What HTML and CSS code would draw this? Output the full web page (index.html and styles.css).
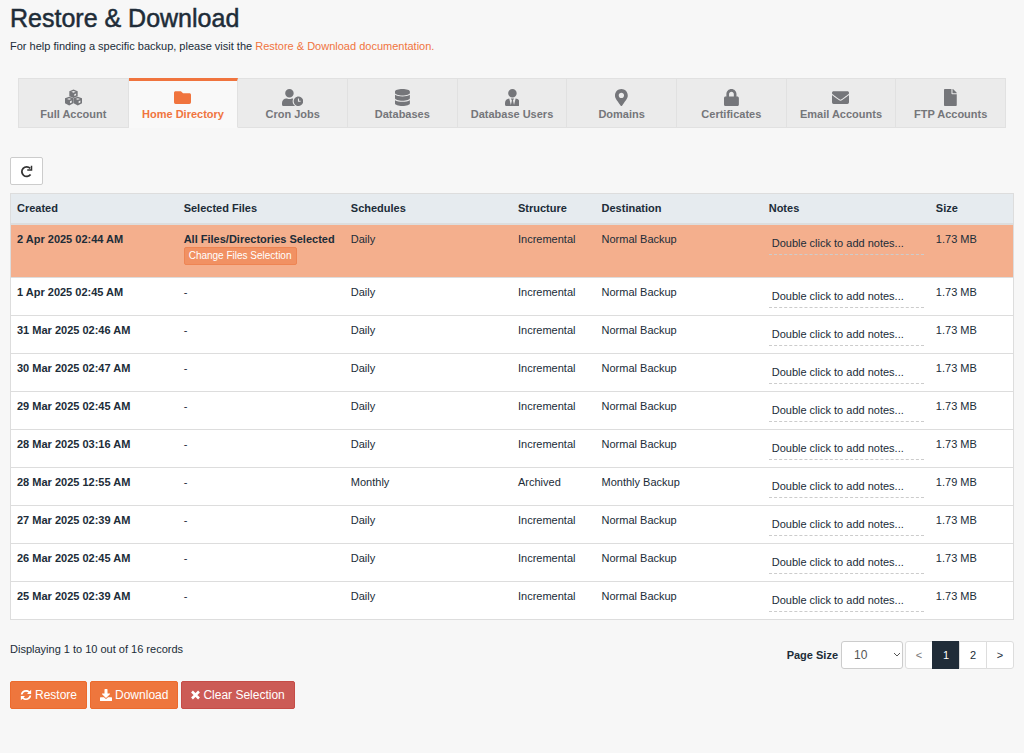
FILE: index.html
```html
<!DOCTYPE html>
<html lang="en">
<head>
    <meta charset="UTF-8">
    <meta name="viewport" content="width=device-width, initial-scale=1.0">
    <title>Restore &amp; Download</title>
    <link rel="stylesheet" href="styles.css">
</head>
<body>
    <h1>Restore &amp; Download</h1>
    <p class="help">For help finding a specific backup, please visit the <a href="#">Restore &amp; Download documentation.</a></p>

    <nav class="tabs">
        <a href="#" class="tab">
            <svg viewBox="0 0 512 512"><path fill-rule="evenodd" d="M256 18l126 50v150l-126 56-126-56V68zM256 62l-66 24 66 26 66-26zM280 156v58l54-24v-56zM126 232l126 50v150l-126 62L0 432V282zM126 276l-66 24 66 26 66-26zM150 370v60l54-27v-56zM386 232l126 50v150l-126 62-126-62V282zM386 276l-66 24 66 26 66-26zM410 370v60l54-27v-56z"/></svg>
            <span>Full Account</span>
        </a>
        <a href="#" class="tab active">
            <svg viewBox="0 0 512 512"><path d="M464 128H272l-64-64H48C21.49 64 0 85.49 0 112v288c0 26.51 21.49 48 48 48h416c26.51 0 48-21.49 48-48V176c0-26.51-21.49-48-48-48z"/></svg>
            <span>Home Directory</span>
        </a>
        <a href="#" class="tab">
            <svg viewBox="0 0 640 512"><path d="M496 224c-79.6 0-144 64.4-144 144s64.4 144 144 144 144-64.4 144-144-64.4-144-144-144zm64 150.3c0 5.3-4.4 9.7-9.7 9.7h-60.6c-5.3 0-9.7-4.4-9.7-9.7v-76.6c0-5.3 4.4-9.7 9.7-9.7h12.6c5.3 0 9.7 4.4 9.7 9.7V352h38.3c5.3 0 9.7 4.4 9.7 9.7v12.6zM320 368c0-27.8 6.7-54.1 18.2-77.5-8-1.5-16.2-2.5-24.6-2.5h-16.7c-22.2 10.2-46.9 16-72.9 16s-50.6-5.8-72.9-16h-16.7C60.2 288 0 348.2 0 422.4V464c0 26.5 21.5 48 48 48h347.1c-45.3-31.9-75.1-84.5-75.1-144zm-96-112c70.7 0 128-57.3 128-128S294.7 0 224 0 96 57.3 96 128s57.3 128 128 128z"/></svg>
            <span>Cron Jobs</span>
        </a>
        <a href="#" class="tab">
            <svg viewBox="0 0 448 512"><path d="M448 73.143v45.714C448 159.143 347.667 192 224 192S0 159.143 0 118.857V73.143C0 32.857 100.333 0 224 0s224 32.857 224 73.143zM448 176v102.857C448 319.143 347.667 352 224 352S0 319.143 0 278.857V176c48.125 33.143 136.208 48.572 224 48.572S399.874 209.143 448 176zm0 160v102.857C448 479.143 347.667 512 224 512S0 479.143 0 438.857V336c48.125 33.143 136.208 48.572 224 48.572S399.874 369.143 448 336z"/></svg>
            <span>Databases</span>
        </a>
        <a href="#" class="tab">
            <svg viewBox="0 0 448 512"><path d="M224 256c70.7 0 128-57.3 128-128S294.7 0 224 0 96 57.3 96 128s57.3 128 128 128zm95.8 32.6L272 480l-32-136 32-56h-96l32 56-32 136-47.8-191.4C56.9 292 0 350.3 0 422.4V464c0 26.5 21.5 48 48 48h352c26.5 0 48-21.5 48-48v-41.6c0-72.1-56.9-130.4-128.2-133.8z"/></svg>
            <span>Database Users</span>
        </a>
        <a href="#" class="tab">
            <svg viewBox="0 0 384 512"><path d="M172.268 501.67C26.97 291.031 0 269.413 0 192 0 85.961 85.961 0 192 0s192 85.961 192 192c0 77.413-26.97 99.031-172.268 309.67-9.535 13.774-29.93 13.773-39.464 0zM192 272c44.183 0 80-35.817 80-80s-35.817-80-80-80-80 35.817-80 80 35.817 80 80 80z"/></svg>
            <span>Domains</span>
        </a>
        <a href="#" class="tab">
            <svg viewBox="0 0 448 512"><path d="M400 224h-24v-72C376 68.2 307.8 0 224 0S72 68.2 72 152v72H48c-26.5 0-48 21.5-48 48v192c0 26.5 21.5 48 48 48h352c26.5 0 48-21.5 48-48V272c0-26.5-21.5-48-48-48zm-104 0H152v-72c0-39.7 32.3-72 72-72s72 32.3 72 72v72z"/></svg>
            <span>Certificates</span>
        </a>
        <a href="#" class="tab">
            <svg viewBox="0 0 512 512"><path d="M502.3 190.8c3.9-3.1 9.7-.2 9.7 4.7V400c0 26.5-21.5 48-48 48H48c-26.5 0-48-21.5-48-48V195.6c0-5 5.7-7.8 9.7-4.7 22.4 17.4 52.1 39.5 154.1 113.6 21.1 15.4 56.7 47.8 92.2 47.6 35.7.3 72-32.8 92.3-47.6 102-74.1 131.6-96.3 154-113.7zM256 320c23.2.4 56.6-29.2 73.4-41.4 132.7-96.3 142.8-104.7 173.4-128.7 5.8-4.5 9.2-11.5 9.2-18.9v-19c0-26.5-21.5-48-48-48H48c-26.5 0-48 21.5-48 48v19c0 7.4 3.4 14.3 9.2 18.9 30.6 23.9 40.7 32.4 173.4 128.7 16.8 12.2 50.2 41.8 73.4 41.4z"/></svg>
            <span>Email Accounts</span>
        </a>
        <a href="#" class="tab">
            <svg viewBox="0 0 384 512"><path d="M224 136V0H24C10.7 0 0 10.7 0 24v464c0 13.3 10.7 24 24 24h336c13.3 0 24-10.7 24-24V160H248c-13.3 0-24-10.8-24-24zm160-14.1v6.1H256V0h6.1c6.4 0 12.5 2.5 17 7l97.9 98c4.5 4.5 7 10.6 7 16.9z"/></svg>
            <span>FTP Accounts</span>
        </a>
    </nav>

    <button type="button" class="btn btn-default" aria-label="Refresh">
        <svg class="refresh-icon" viewBox="0 0 14 14"><path d="M11.4 10.2A5.2 5.2 0 1 1 11 3.6" fill="none" stroke="currentColor" stroke-width="1.9"/><path d="M13.2 .8v5.4H7.8V4.7h3.8V.8z"/></svg>
    </button>

    <table class="backups">
        <colgroup>
            <col class="col-2"><col class="col-2"><col class="col-2"><col class="col-1"><col class="col-2"><col class="col-2"><col class="col-1">
        </colgroup>
        <thead>
            <tr>
                <th>Created</th>
                <th>Selected Files</th>
                <th>Schedules</th>
                <th>Structure</th>
                <th>Destination</th>
                <th>Notes</th>
                <th>Size</th>
            </tr>
        </thead>
        <tbody>
            <tr class="selected">
                <td class="created">2 Apr 2025 02:44 AM</td>
                <td><strong>All Files/Directories Selected</strong><button type="button" class="btn-change">Change Files Selection</button></td>
                <td>Daily</td>
                <td>Incremental</td>
                <td>Normal Backup</td>
                <td><div class="note">Double click to add notes...</div></td>
                <td>1.73 MB</td>
            </tr>
            <tr>
                <td class="created">1 Apr 2025 02:45 AM</td>
                <td>-</td>
                <td>Daily</td>
                <td>Incremental</td>
                <td>Normal Backup</td>
                <td><div class="note">Double click to add notes...</div></td>
                <td>1.73 MB</td>
            </tr>
            <tr>
                <td class="created">31 Mar 2025 02:46 AM</td>
                <td>-</td>
                <td>Daily</td>
                <td>Incremental</td>
                <td>Normal Backup</td>
                <td><div class="note">Double click to add notes...</div></td>
                <td>1.73 MB</td>
            </tr>
            <tr>
                <td class="created">30 Mar 2025 02:47 AM</td>
                <td>-</td>
                <td>Daily</td>
                <td>Incremental</td>
                <td>Normal Backup</td>
                <td><div class="note">Double click to add notes...</div></td>
                <td>1.73 MB</td>
            </tr>
            <tr>
                <td class="created">29 Mar 2025 02:45 AM</td>
                <td>-</td>
                <td>Daily</td>
                <td>Incremental</td>
                <td>Normal Backup</td>
                <td><div class="note">Double click to add notes...</div></td>
                <td>1.73 MB</td>
            </tr>
            <tr>
                <td class="created">28 Mar 2025 03:16 AM</td>
                <td>-</td>
                <td>Daily</td>
                <td>Incremental</td>
                <td>Normal Backup</td>
                <td><div class="note">Double click to add notes...</div></td>
                <td>1.73 MB</td>
            </tr>
            <tr>
                <td class="created">28 Mar 2025 12:55 AM</td>
                <td>-</td>
                <td>Monthly</td>
                <td>Archived</td>
                <td>Monthly Backup</td>
                <td><div class="note">Double click to add notes...</div></td>
                <td>1.79 MB</td>
            </tr>
            <tr>
                <td class="created">27 Mar 2025 02:39 AM</td>
                <td>-</td>
                <td>Daily</td>
                <td>Incremental</td>
                <td>Normal Backup</td>
                <td><div class="note">Double click to add notes...</div></td>
                <td>1.73 MB</td>
            </tr>
            <tr>
                <td class="created">26 Mar 2025 02:45 AM</td>
                <td>-</td>
                <td>Daily</td>
                <td>Incremental</td>
                <td>Normal Backup</td>
                <td><div class="note">Double click to add notes...</div></td>
                <td>1.73 MB</td>
            </tr>
            <tr>
                <td class="created">25 Mar 2025 02:39 AM</td>
                <td>-</td>
                <td>Daily</td>
                <td>Incremental</td>
                <td>Normal Backup</td>
                <td><div class="note">Double click to add notes...</div></td>
                <td>1.73 MB</td>
            </tr>
        </tbody>
    </table>

    <div class="table-footer">
        <p>Displaying 1 to 10 out of 16 records</p>
        <div class="paging">
            <label for="pageSize">Page Size</label>
            <div class="select-wrap">
                <select id="pageSize">
                    <option>10</option>
                    <option>20</option>
                    <option>50</option>
                </select>
                <svg class="chevron" viewBox="0 0 8 6"><path d="M1 1l3 3 3-3" fill="none" stroke="currentColor"/></svg>
            </div>
            <div class="pages">
                <button type="button" class="prev" disabled>&lt;</button>
                <button type="button" class="current">1</button>
                <button type="button">2</button>
                <button type="button">&gt;</button>
            </div>
        </div>
    </div>

    <div class="actions">
        <button type="button" class="btn btn-primary">
            <svg viewBox="0 0 512 512"><path d="M35 235C45 115 140 40 256 40c62 0 115 22 155 58l65-62v180H300l60-62c-28-26-62-42-104-42-75 0-128 48-148 123zM477 277C467 397 372 472 256 472c-62 0-115-22-155-58l-65 62V296h176l-60 62c28 26 62 42 104 42 75 0 128-48 148-123z"/></svg>
            Restore
        </button>
        <button type="button" class="btn btn-primary">
            <svg viewBox="0 0 512 512"><path d="M216 0h80c13.3 0 24 10.7 24 24v168h87.7c17.8 0 26.7 21.5 14.1 34.1L269.7 378.3c-7.5 7.5-19.8 7.5-27.3 0L90.1 226.1c-12.6-12.6-3.7-34.1 14.1-34.1H192V24c0-13.3 10.7-24 24-24zm296 376v112c0 13.3-10.7 24-24 24H24c-13.3 0-24-10.7-24-24V376c0-13.3 10.7-24 24-24h146.7l49 49c20.1 20.1 52.5 20.1 72.6 0l49-49H488c13.3 0 24 10.7 24 24z"/></svg>
            Download
        </button>
        <button type="button" class="btn btn-danger">
            <svg class="times" viewBox="0 0 9 12"><path d="M1 2.5l7 7M8 2.5l-7 7" fill="none" stroke="currentColor" stroke-width="2.6"/></svg>
            Clear Selection
        </button>
    </div>
</body>
</html>
```
FILE: styles.css
```css
* {
    box-sizing: border-box;
}
body {
    margin: 0;
    padding: 4px 10px 40px;
    background-color: #f7f7f7;
    color: #202c38;
    font-family: "Liberation Sans", Arial, Helvetica, sans-serif;
    font-size: 11px;
    line-height: 16px;
}
h1 {
    margin: 0;
    font-size: 25px;
    font-weight: 400;
    line-height: 28px;
    -webkit-text-stroke: 0.5px currentColor;
}
p {
    margin: 0;
}
.help {
    margin-top: 6px;
}
a {
    color: #f0743e;
    text-decoration: none;
}
svg {
    fill: currentColor;
}
button, select {
    font-family: inherit;
    color: inherit;
    cursor: pointer;
}

/* tabs */
.tabs {
    display: grid;
    grid-template-columns: repeat(9, 1fr);
    margin: 24px 8px 29px;
    border-left: 1px solid #e1e1e1;
}
.tab {
    display: flex;
    flex-direction: column;
    align-items: center;
    padding: 10px 0 5px;
    background-color: #ebebeb;
    border: 1px solid #e1e1e1;
    border-left: none;
    color: #75767a;
    font-weight: bold;
}
.tab svg {
    height: 17px;
}
.tab.active {
    padding-top: 8px;
    background-color: #f9f9f9;
    border-top: 3px solid #f0743e;
    border-bottom-color: #f9f9f9;
    color: #f0743e;
}

/* buttons */
.btn {
    display: inline-flex;
    align-items: center;
    gap: 3px;
    height: 28px;
    padding: 0 9px;
    border: 1px solid;
    border-radius: 2px;
    font-size: 12px;
    line-height: 16px;
}
.btn svg {
    width: 12px;
    height: 12px;
}
.btn-default {
    background-color: #fff;
    border-color: #ccc;
    color: #333;
}
.btn-default .refresh-icon {
    width: 13px;
    height: 13px;
}
.btn-primary {
    background-color: #ee763d;
    border-color: #ec6a2d;
    color: #fff;
}
.btn-danger {
    background-color: #cc5b56;
    border-color: #c54c47;
    color: #fff;
}
.btn .times {
    width: 9px;
}

/* backups table */
.backups {
    width: 100%;
    margin-top: 8px;
    table-layout: fixed;
    border-collapse: collapse;
    border: 1px solid #ddd;
    background-color: #fff;
}
.col-1 {
    width: 8.3333%;
}
.col-2 {
    width: 16.6667%;
}
.backups th {
    padding: 6px 6px 7px;
    background-color: #e6ebef;
    border-bottom: 2px solid #ddd;
    text-align: left;
}
.backups td {
    padding: 6px 6px 7px;
    border-top: 1px solid #ddd;
    vertical-align: top;
}
.backups .created {
    font-weight: bold;
}
.backups .selected {
    height: 53px;
    background-color: #f4af8d;
}
.backups strong {
    display: block;
}
.btn-change {
    display: block;
    height: 18px;
    padding: 0 4px;
    background-color: #f19163;
    border: 1px solid #ee8554;
    border-radius: 2px;
    color: #fff;
    font-size: 10px;
    line-height: 16px;
}
.note {
    padding: 4px 3px 3px;
    border-bottom: 1px dashed #ccc;
}

/* below the table */
.table-footer {
    display: flex;
    justify-content: space-between;
    margin-top: 21px;
}
.paging {
    display: flex;
    align-items: center;
}
.paging label {
    margin-right: 3px;
    font-weight: bold;
}
.select-wrap {
    position: relative;
    margin-right: 2px;
}
.select-wrap select {
    width: 62px;
    height: 28px;
    padding: 0 12px;
    appearance: none;
    background-color: #fff;
    border: 1px solid #ccc;
    border-radius: 3px;
    color: #555;
    font-size: 12px;
}
.chevron {
    position: absolute;
    top: 11px;
    right: 2px;
    width: 8px;
    height: 6px;
    color: #555;
    pointer-events: none;
}
.pages {
    display: flex;
}
.pages button {
    width: 28px;
    height: 28px;
    margin-left: -1px;
    padding: 0;
    background-color: #fff;
    border: 1px solid #ddd;
    font-size: 11px;
}
.pages button:first-child {
    margin-left: 0;
    border-radius: 3px 0 0 3px;
}
.pages button:last-child {
    border-radius: 0 3px 3px 0;
}
.pages .prev {
    color: #777;
    cursor: not-allowed;
}
.pages .current {
    background-color: #202c38;
    border-color: #202c38;
    color: #fff;
}
.actions {
    display: flex;
    gap: 3px;
    margin-top: 12px;
}
```
